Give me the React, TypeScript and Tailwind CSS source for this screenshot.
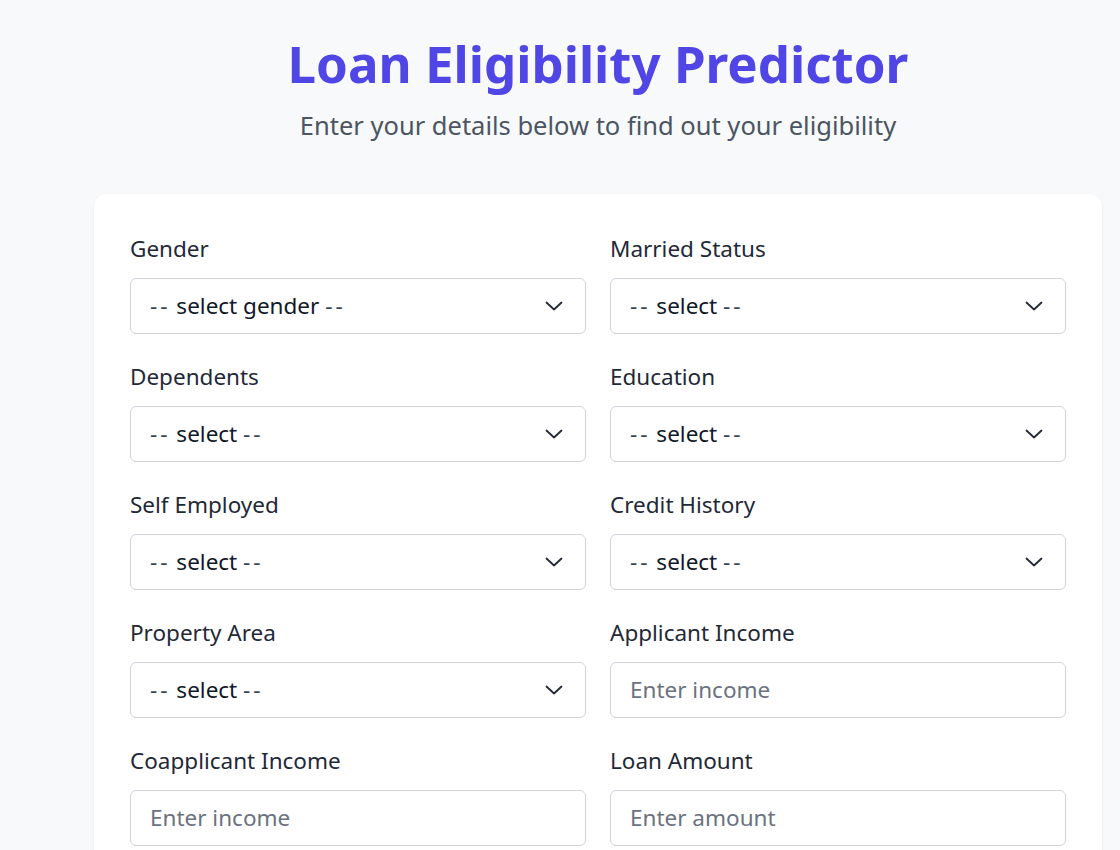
import React from "react";

const Chevron = () => (
  <svg width="18" height="10" viewBox="0 0 18 10" fill="none" stroke="#1f2937" strokeWidth="1.8" strokeLinecap="round" strokeLinejoin="round">
    <path d="M1.5 1.5L9 8.5L16.5 1.5" />
  </svg>
);

type Field = { label: string; kind: "select" | "input"; text: string };

const fields: Field[] = [
  { label: "Gender", kind: "select", text: "select gender" },
  { label: "Married Status", kind: "select", text: "select" },
  { label: "Dependents", kind: "select", text: "select" },
  { label: "Education", kind: "select", text: "select" },
  { label: "Self Employed", kind: "select", text: "select" },
  { label: "Credit History", kind: "select", text: "select" },
  { label: "Property Area", kind: "select", text: "select" },
  { label: "Applicant Income", kind: "input", text: "Enter income" },
  { label: "Coapplicant Income", kind: "input", text: "Enter income" },
  { label: "Loan Amount", kind: "input", text: "Enter amount" },
  { label: "Loan Amount Term", kind: "input", text: "Enter term" },
];

const Dashes = () => <span className="tracking-[3px] text-[#374151]">--</span>;

export default function App() {
  return (
    <div
      className="min-h-[850px] bg-[#f8f9fb] overflow-hidden"
      style={{ fontFamily: '"Noto Sans", "Open Sans", sans-serif' }}
    >
      <div className="ml-[94px] w-[1008px] pt-[27px] text-center">
        <h1 className="text-[51px] leading-[72px] font-bold text-[#4f46e5]">Loan Eligibility Predictor</h1>
        <p className="text-[25.5px] leading-[34px] text-[#4b5563] mt-[9px]">Enter your details below to find out your eligibility</p>
      </div>
      <div className="ml-[94px] w-[1008px] mt-[52px] bg-white rounded-xl shadow-[0_1px_3px_rgba(0,0,0,0.06)] px-9 pt-[41px] pb-10">
        <div className="grid grid-cols-2 gap-x-6 gap-y-[29px]">
          {fields.map((f) => (
            <div key={f.label}>
              <div className="text-[22.5px] leading-[28px] text-[#1f2937] mb-[15px]">{f.label}</div>
              <div className="h-14 border border-[#d1d5db] rounded-md flex items-center justify-between pl-[19px] pr-[22px]">
                {f.kind === "select" ? (
                  <span className="text-[22.5px] text-[#111827]">
                    <Dashes /> {f.text} <Dashes />
                  </span>
                ) : (
                  <span className="text-[22.5px] text-[#6b7280]">{f.text}</span>
                )}
                {f.kind === "select" && <Chevron />}
              </div>
            </div>
          ))}
        </div>
      </div>
    </div>
  );
}
